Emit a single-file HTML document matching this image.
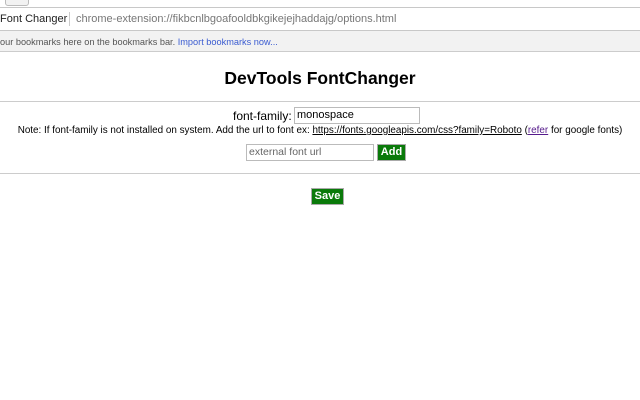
<!DOCTYPE html>
<html><head><meta charset="utf-8"><style>
body{margin:0;width:640px;height:400px;background:#fff;font-family:"Liberation Sans",sans-serif;position:relative;overflow:hidden}
.abs{position:absolute}
</style></head><body>
<div class="abs" style="left:0;top:0;width:640px;height:7px;background:#fff;border-bottom:1px solid #c8c8c8"></div>
<div class="abs" style="left:5px;top:-4px;width:22px;height:8px;border:1px solid #bbb;border-radius:3px;background:#f2f2f2"></div>
<div class="abs" style="left:0;top:8px;width:640px;height:22px;background:#fff;border-bottom:1px solid #c8c8c8"></div>
<div class="abs" style="left:0;top:13px;font-size:11px;color:#222">Font Changer</div>
<div class="abs" style="left:69px;top:12px;width:1px;height:14px;background:#ccc"></div>
<div class="abs" style="left:76px;top:13px;font-size:11px;color:#777">chrome-extension://fikbcnlbgoafooldbkgikejejhaddajg/options.html</div>
<div class="abs" style="left:0;top:31px;width:640px;height:20px;background:#f2f2f2;border-bottom:1px solid #ccc"></div>
<div class="abs" style="left:0;top:37px;font-size:9.2px;color:#555">our bookmarks here on the bookmarks bar. <span style="color:#3b5cd1">Import bookmarks now...</span></div>
<div class="abs" style="left:0;top:68px;width:640px;text-align:center;font-size:17.5px;font-weight:bold;color:#000">DevTools FontChanger</div>
<div class="abs" style="left:0;top:101px;width:640px;height:1px;background:#ccc"></div>
<div class="abs" style="left:233px;top:109px;font-size:12px;color:#000">font-family:</div>
<div class="abs" style="left:294px;top:107px;width:122px;height:15px;border:1px solid #bbb;font-size:11px;line-height:15px;padding-left:2px">monospace</div>
<div class="abs" style="left:0;top:125px;width:640px;text-align:center;font-size:9.9px;color:#000">Note: If font-family is not installed on system. Add the url to font ex: <u>https://fonts.googleapis.com/css?family=Roboto</u> (<u style="color:#551a8b">refer</u> for google fonts)</div>
<div class="abs" style="left:246px;top:144px;width:124px;height:15px;border:1px solid #bbb;font-size:10.5px;line-height:15px;padding-left:2px;color:#666">external font url</div>
<div class="abs" style="left:377px;top:144px;width:27px;height:15px;background:#0a7a0a;border:1px solid #aaa;color:#fff;font-weight:bold;font-size:11px;line-height:15px;text-align:center">Add</div>
<div class="abs" style="left:0;top:173px;width:640px;height:1px;background:#ccc"></div>
<div class="abs" style="left:311px;top:188px;width:31px;height:15px;background:#0a7a0a;border:1px solid #aaa;color:#fff;font-weight:bold;font-size:11px;line-height:15px;text-align:center">Save</div>
</body></html>
